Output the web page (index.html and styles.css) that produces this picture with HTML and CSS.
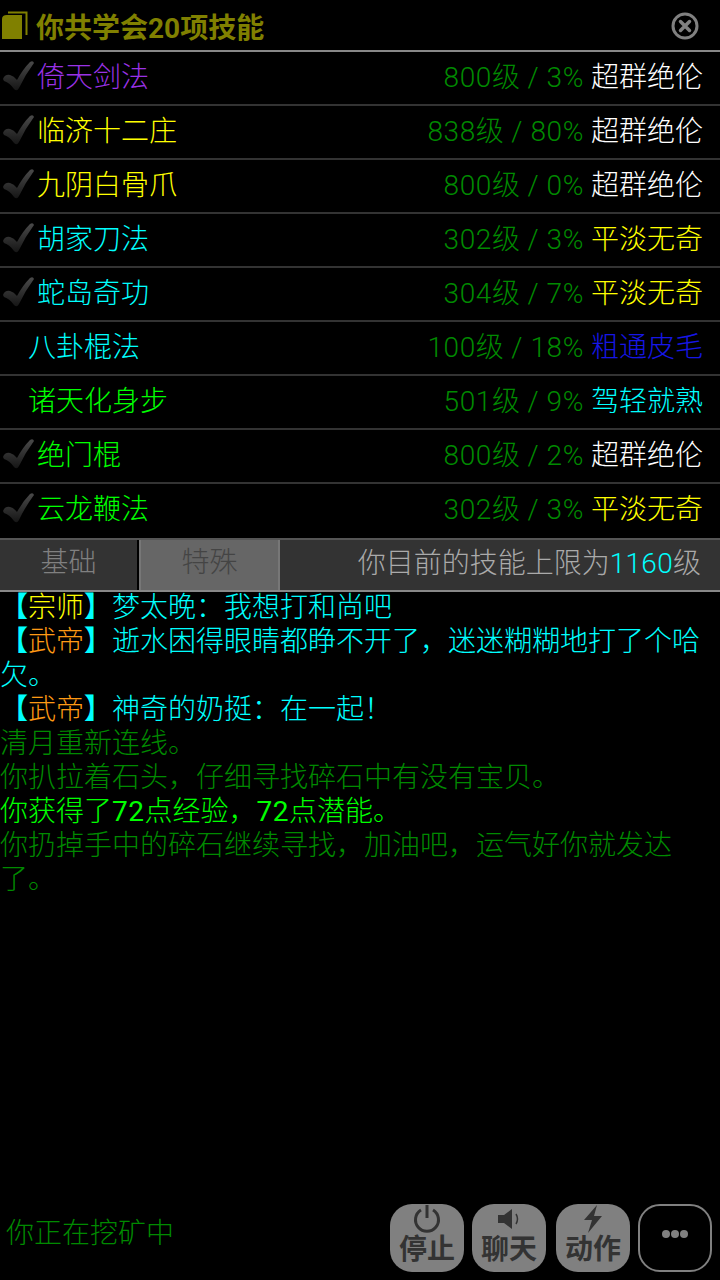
FILE: index.html
```
<!DOCTYPE html>
<html lang="zh">
<head>
<meta charset="utf-8">
<title>技能</title>
<link rel="stylesheet" href="styles.css">
</head>
<body>
<svg class="defs" width="0" height="0"><defs>
<linearGradient id="ck" x1="0" y1="0" x2="0" y2="1"><stop offset="0" stop-color="#4a4a4a"/><stop offset="1" stop-color="#161616"/></linearGradient>
<symbol id="check" viewBox="0 0 36 34"><path d="M2 20Q4 15 9 16Q13 17 16 21Q22 10 29 3Q32 1 33 4Q24 16 18 29Q16 33 13 30Q9 24 3 22Z" fill="url(#ck)"/></symbol>
</defs></svg>
<div class="app">
<header class="head">
  <svg class="book" width="28" height="30" viewBox="0 0 28 30"><path d="M2 8Q2 4 7 4H22V28H2Z" fill="#808000"/><path d="M8 1.500H26.500V24" fill="none" stroke="#808000" stroke-width="2"/></svg>
  <span class="title">你共学会20项技能</span>
  <svg class="close" width="28" height="28" viewBox="0 0 28 28"><circle cx="14" cy="14" r="12" fill="none" stroke="#808080" stroke-width="3"/><path d="M9.500 9.500L18.500 18.500M18.500 9.500L9.500 18.500" stroke="#808080" stroke-width="3.500" stroke-linecap="round"/></svg>
</header>
<ul class="skills">
  <li class="row"><svg class="tick"><use href="#check"/></svg><span class="name purple">倚天剑法</span><span class="lvl"><b>800</b>级<b> / 3%</b></span><span class="rank white">超群绝伦</span></li>
  <li class="row"><svg class="tick"><use href="#check"/></svg><span class="name yellow">临济十二庄</span><span class="lvl"><b>838</b>级<b> / 80%</b></span><span class="rank white">超群绝伦</span></li>
  <li class="row"><svg class="tick"><use href="#check"/></svg><span class="name yellow">九阴白骨爪</span><span class="lvl"><b>800</b>级<b> / 0%</b></span><span class="rank white">超群绝伦</span></li>
  <li class="row"><svg class="tick"><use href="#check"/></svg><span class="name cyan">胡家刀法</span><span class="lvl"><b>302</b>级<b> / 3%</b></span><span class="rank yellow">平淡无奇</span></li>
  <li class="row"><svg class="tick"><use href="#check"/></svg><span class="name cyan">蛇岛奇功</span><span class="lvl"><b>304</b>级<b> / 7%</b></span><span class="rank yellow">平淡无奇</span></li>
  <li class="row plain"><span class="name cyan">八卦棍法</span><span class="lvl"><b>100</b>级<b> / 18%</b></span><span class="rank blue">粗通皮毛</span></li>
  <li class="row plain"><span class="name lime">诸天化身步</span><span class="lvl"><b>501</b>级<b> / 9%</b></span><span class="rank cyan">驾轻就熟</span></li>
  <li class="row"><svg class="tick"><use href="#check"/></svg><span class="name lime">绝门棍</span><span class="lvl"><b>800</b>级<b> / 2%</b></span><span class="rank white">超群绝伦</span></li>
  <li class="row"><svg class="tick"><use href="#check"/></svg><span class="name lime">云龙鞭法</span><span class="lvl"><b>302</b>级<b> / 3%</b></span><span class="rank yellow">平淡无奇</span></li>
</ul>
<nav class="tabs">
  <span class="tab">基础</span>
  <span class="tab active">特殊</span>
  <span class="limit">你目前的技能上限为<span class="cyan num">1160</span>级</span>
</nav>
<main class="log">
  <p class="cyan"><span class="br">【</span><span class="yellow">宗师</span><span class="br">】</span>梦太晚：我想打和尚吧</p>
  <p class="cyan"><span class="br">【</span><span class="orange">武帝</span><span class="br">】</span>逝水困得眼睛都睁不开了，迷迷糊糊地打了个哈欠。</p>
  <p class="cyan"><span class="br">【</span><span class="orange">武帝</span><span class="br">】</span>神奇的奶挺：在一起！</p>
  <p class="green">清月重新连线。</p>
  <p class="green">你扒拉着石头，仔细寻找碎石中有没有宝贝。</p>
  <p class="lime">你获得了<b class="wide-num">72</b>点经验，<b class="wide-num">72</b>点潜能。</p>
  <p class="green">你扔掉手中的碎石继续寻找，加油吧，运气好你就发达了。</p>
</main>
<footer class="foot">
  <span class="status">你正在挖矿中</span>
  <div class="btns">
    <div class="btn"><svg width="30" height="30" viewBox="0 0 30 30"><path d="M9 6A11.500 11.500 0 1 0 21 6" fill="none" stroke="#333" stroke-width="3"/><path d="M15 1V14" stroke="#333" stroke-width="3"/></svg><span>停止</span></div>
    <div class="btn"><svg width="30" height="30" viewBox="0 0 30 30"><path d="M4 11H10L18 5V25L10 19H4Z" fill="#333"/><path d="M22 10Q25 15 22 20" fill="none" stroke="#333" stroke-width="1.500"/></svg><span>聊天</span></div>
    <div class="btn wide"><svg width="30" height="30" viewBox="0 0 30 30"><path d="M19 1L6 16H14L10 29L24 12H16Z" fill="#333"/></svg><span>动作</span></div>
    <div class="btn more"><span class="dots"><i></i><i></i><i></i></span></div>
  </div>
</footer>
</div>
</body>
</html>
```
FILE: styles.css
```
* { box-sizing: border-box; }
html, body { margin: 0; padding: 0; background: #000; }
body { font-family: Roboto, "Noto Sans CJK SC", sans-serif; font-size: 28px; font-weight: 300; }
b { font-weight: 400; }
.defs { position: absolute; }
.app { width: 720px; height: 1280px; display: flex; flex-direction: column; overflow: hidden; }

.head { height: 52px; display: flex; align-items: center; border-bottom: 2px solid #888; padding: 0 21px 0 0; }
.book { flex: none; margin-top: 2px; }
.title { flex: 1; margin-left: 8px; padding-top: 8px; color: #808000; font-weight: 700; font-size: 28px; line-height: 50px; }
.close { flex: none; margin-top: 2px; }

.skills { list-style: none; margin: 0; padding: 0; }
.row { height: 54px; display: flex; align-items: center; border-bottom: 2px solid #333; padding: 0 17px 6px 1px; }
.row:last-child { border-bottom: 0; padding-bottom: 8px; }
.tick { width: 36px; height: 34px; flex: none; margin-top: 2px; }
.name { flex: 1; }
.plain .name { margin-left: 27px; }
.lvl { color: #008a00; }
.lvl b { font-weight: 300; letter-spacing: 0.6px; }
.rank { margin-left: 7px; }

.tabs { height: 54px; display: flex; background: #333; border-top: 2px solid #555; border-bottom: 2px solid #888; color: #808080; }
.tab { width: 139px; flex: none; display: flex; align-items: center; justify-content: center; border-right: 2px solid #000; padding-bottom: 10px; }
.tab.active { width: 141px; background: #666; color: #444; border-left: 2px solid #777; border-right: 2px solid #777; }
.limit { flex: 1; text-align: right; padding-right: 19px; line-height: 48px; color: #aaa; }
.num { letter-spacing: 0.3px; }

.log { flex: 1; font-size: 28px; line-height: 34px; margin-top: -1px; }
.log p { margin: 0; }
.br { color: #0ff; font-weight: 700; }
.wide-num { letter-spacing: 0.5px; }

.foot { height: 86px; display: flex; align-items: flex-start; justify-content: space-between; padding: 0 8px 0 6px; }
.status { color: #008a00; line-height: 48px; margin-top: 16px; }
.btns { display: flex; gap: 8px; margin-top: 10px; }
.btn { width: 74px; height: 68px; border-radius: 22px; background: #808080; color: #333; display: flex; flex-direction: column; align-items: center; font-weight: 700; }
.btn.wide { margin-left: 2px; }
.btn svg { height: 30px; flex: none; margin-bottom: -3px; }
.btn span { line-height: 38px; font-size: 28px; }
.btn.more { background: #000; border: 2px solid #808080; justify-content: center; }
.btn .dots { display: flex; gap: 1px; height: 14px; margin-top: -3px; line-height: 1; }
.dots i { width: 8px; height: 8px; border-radius: 50%; background: #808080; }

.white { color: #fff; }
.yellow { color: #ff0; }
.cyan { color: #0ff; }
.lime { color: #0f0; }
.purple { color: #9a32e6; }
.blue { color: #1616e6; }
.orange { color: #ff9a14; }
.green { color: #008a00; }
```
